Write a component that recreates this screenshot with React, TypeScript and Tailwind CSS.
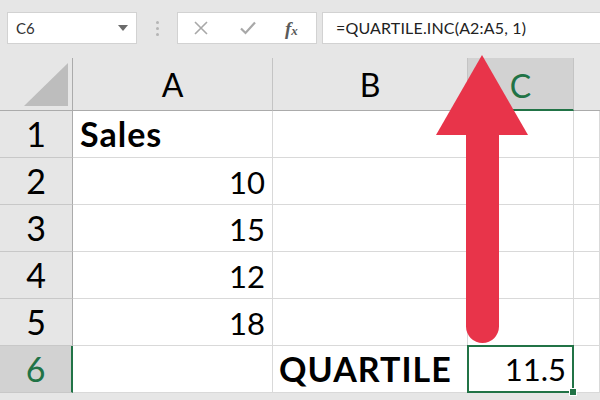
import { ReactNode } from 'react';

const font = { fontFamily: 'Lato, "Open Sans", sans-serif' };

const rows = [
    { n: '1', a: 'Sales', aBold: true, b: '', c: '' },
    { n: '2', a: '10', b: '', c: '' },
    { n: '3', a: '15', b: '', c: '' },
    { n: '4', a: '12', b: '', c: '' },
    { n: '5', a: '18', b: '', c: '' },
    { n: '6', a: '', b: 'QUARTILE', c: '11.5', active: true },
];

function Cell({
    children,
    className = '',
    border = 'border-r border-b border-[#d9d9d9]',
}: {
    children?: ReactNode;
    className?: string;
    border?: string;
}) {
    return (
        <div className={`flex items-end bg-white pb-[6px] text-[31px] leading-none text-black ${border} ${className}`}>
            {children}
        </div>
    );
}

export default function App() {
    return (
        <div className="relative h-[400px] w-[600px] overflow-hidden bg-[#e6e6e6]" style={font}>
            {/* formula bar */}
            <div className="flex h-[58px] items-start pt-[12px] pl-[7px]">
                <div className="flex h-[32px] w-[130px] items-center justify-between border border-[#d2d2d2] bg-white pr-[8px] pl-[8px] text-[15px] text-[#333]">
                    <span>C6</span>
                    <svg width="10" height="6" viewBox="0 0 10 6">
                        <path d="M0 0 L10 0 L5 6 Z" fill="#6b6b6b" />
                    </svg>
                </div>
                <div className="flex h-[32px] w-[40px] flex-col items-center justify-center gap-[3px]">
                    <span className="h-[3px] w-[3px] rounded-full bg-[#b5b5b5]" />
                    <span className="h-[3px] w-[3px] rounded-full bg-[#b5b5b5]" />
                    <span className="h-[3px] w-[3px] rounded-full bg-[#b5b5b5]" />
                </div>
                <div className="flex h-[32px] w-[140px] items-center border border-[#d2d2d2] bg-white">
                    <svg className="ml-[16px]" width="14" height="14" viewBox="0 0 14 14">
                        <path d="M1 1 L13 13 M13 1 L1 13" stroke="#a8a8a8" strokeWidth="1.6" />
                    </svg>
                    <svg className="ml-[32px]" width="16" height="14" viewBox="0 0 16 14">
                        <path d="M1 7.5 L5.5 12 L15 1.5" stroke="#a8a8a8" strokeWidth="2.2" fill="none" />
                    </svg>
                    <span
                        className="ml-[29px] text-[19px] leading-none font-bold text-[#5a5a5a] italic"
                        style={{ fontFamily: '"Liberation Serif", serif' }}
                    >
                        f<span className="text-[13px]">x</span>
                    </span>
                </div>
                <div className="ml-[5px] flex h-[32px] flex-1 items-center border-y border-l border-[#d2d2d2] bg-white pl-[13px] text-[16px] tracking-[0.01em] text-[#222]">
                    =QUARTILE.INC(A2:A5, 1)
                </div>
            </div>

            {/* sheet grid */}
            <div className="grid grid-cols-[73px_200px_195px_106px_1fr] grid-rows-[53px_47px_47px_47px_47px_47px_47px_1fr]">
                <div className="relative border-r border-b border-[#ababab] bg-[#e6e6e6]">
                    <svg className="absolute right-[4px] bottom-[4px]" width="44" height="43" viewBox="0 0 44 43">
                        <path d="M0 43 L44 0 L44 43 Z" fill="#bdbdbd" />
                    </svg>
                </div>
                <div className="flex items-center justify-center border-r border-b border-[#c4c4c4] border-b-[#ababab] pt-[2px] text-[32px] text-black">A</div>
                <div className="flex items-center justify-center border-r border-b border-[#c4c4c4] border-b-[#ababab] pt-[2px] text-[32px] text-black">B</div>
                <div className="flex items-center justify-center border-r border-b-2 border-[#c4c4c4] border-b-[#217346] bg-[#d2d2d2] pt-[4px] text-[32px] text-[#217346]">C</div>
                <div className="border-b border-[#ababab]" />

                {rows.map((r) => (
                    <div key={r.n} className="contents">
                        <div
                            className={`flex items-center justify-center border-b border-[#c8c8c8] text-[34px] leading-none ${
                                r.active
                                    ? 'border-r-2 border-r-[#217346] bg-[#d2d2d2] text-[#217346]'
                                    : 'border-r border-r-[#ababab] text-black'
                            }`}
                        >
                            {r.n}
                        </div>
                        <Cell
                            className={
                                r.aBold
                                    ? 'justify-start pl-[7px] text-[34px] font-bold tracking-[0.03em]'
                                    : 'justify-end pr-[7px]'
                            }
                        >
                            {r.a}
                        </Cell>
                        <Cell className="justify-start pl-[6px] text-[34px] font-bold tracking-[0.03em]">{r.b}</Cell>
                        {r.active ? (
                            <Cell
                                border="relative -mt-px -ml-px border-2 border-[#217346]"
                                className="justify-end pr-[6px]"
                            >
                                {r.c}
                                <span className="absolute -right-[5px] -bottom-[5px] h-[8px] w-[8px] border border-white bg-[#217346]" />
                            </Cell>
                        ) : (
                            <Cell className="justify-end pr-[7px]">{r.c}</Cell>
                        )}
                        <Cell />
                    </div>
                ))}

                <div className="border-r border-[#ababab] bg-[#e6e6e6]" />
                <div className="border-r border-[#d9d9d9] bg-white" />
                <div className="border-r border-[#d9d9d9] bg-white" />
                <div className="border-r border-[#d9d9d9] bg-white" />
                <div className="bg-white" />
            </div>

            {/* red arrow */}
            <svg className="pointer-events-none absolute top-0 left-0" width="600" height="400" viewBox="0 0 600 400">
                <path d="M482 55 L528 135 L436 135 Z" fill="#e8344a" />
                <path d="M466 130 L499 130 L499 326.5 A16.5 16.5 0 0 1 466 326.5 Z" fill="#e8344a" />
            </svg>
        </div>
    );
}
